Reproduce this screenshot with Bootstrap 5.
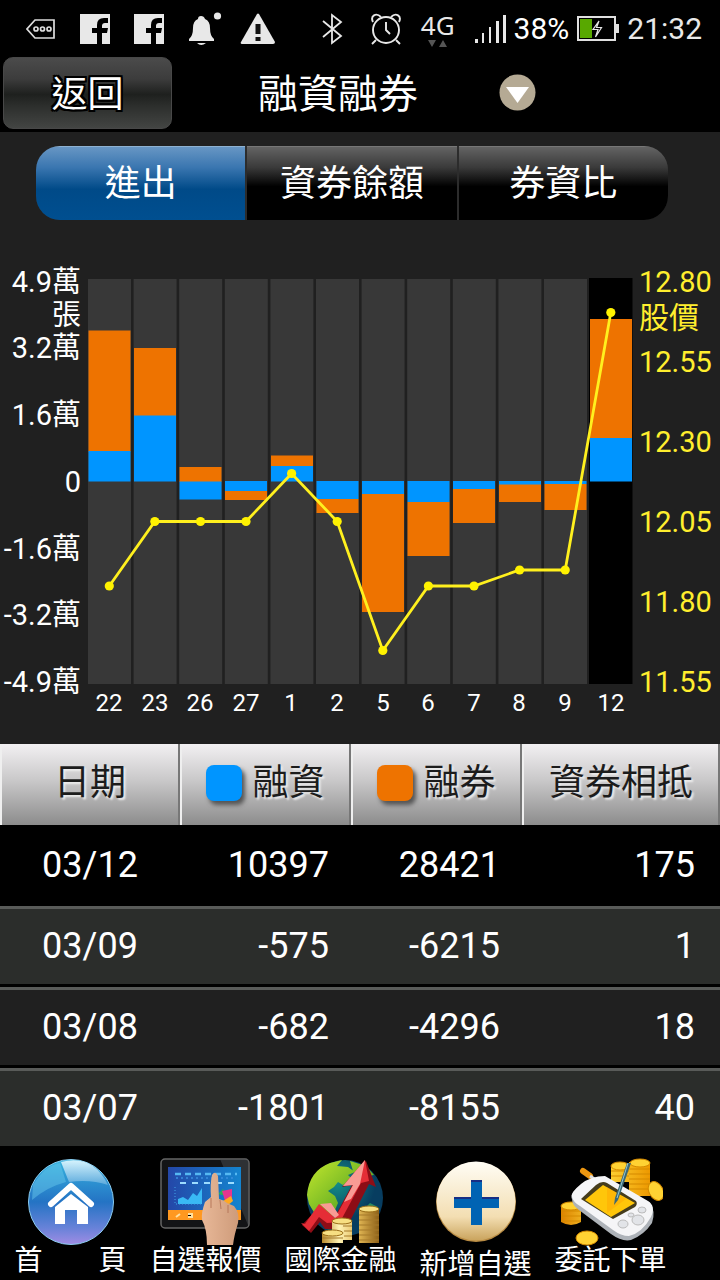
<!DOCTYPE html>
<html lang="zh-Hant">
<head>
<meta charset="utf-8">
<meta name="viewport" content="width=device-width, initial-scale=1">
<title>融資融券</title>
<link rel="stylesheet" href="https://cdn.jsdelivr.net/npm/bootstrap@5.3.0/dist/css/bootstrap.min.css">
<style>
body{background:#202020;color:#fff;font-family:Roboto,"Noto Sans CJK TC",sans-serif}
svg{display:block;flex:none}
.status-bar{height:57px;padding:0 18px 0 26px;font-size:30px;line-height:56px;color:#e8e8e8}
.status-left{gap:24px}
.net{font-family:"Noto Sans",sans-serif;font-size:26px;line-height:28px;height:36px}
.title-bar{height:75px;padding:0 3px}
.title-bar h1{font-size:40px;line-height:76px;margin-left:86px}
.menu-btn{margin:17px 0 0 81px}
.back-btn{width:169px;height:72px;border:1px solid #484848;border-radius:10px;font-size:36px;line-height:36px;padding:4px 0 0;color:#fff;
 background:linear-gradient(#4b4b4b,#3c3c3c 30%,#1e201e 52%,#2c2e2c 68%,#434543);
 text-shadow:2px 0 #000,-2px 0 #000,0 2px #000,0 -2px #000,2px 2px #000,-2px -2px #000,2px -2px #000,-2px 2px #000}
.tabs{margin:14px 52px 20px 36px;border-radius:24px;overflow:hidden;gap:2px;background:#2c2c2c}
.tabs button{height:74px;border:0;border-top:1px solid #777;color:#fff;font-size:36px;line-height:72px;padding:0;
 background:linear-gradient(#636363,#3a3a3a 28%,#000 54%,#000)}
.tabs button.active{border-top-color:#8eb2d2;background:linear-gradient(#6796c4,#3a76b0 28%,#004a88 58%,#004f90)}
.chart{width:100%;height:auto}
.axis-label{font-size:29px}
.quotes{table-layout:fixed;font-size:36px;line-height:40px;border-collapse:separate;border-spacing:0}
.quotes th{height:81px;padding:0 0 4px;font-weight:400;color:#1c1c1c;text-align:center;text-shadow:2px 2px 2px #eee;
 border-left:2px solid #efefef;border-right:2px solid #777;
 background:linear-gradient(#f2f0f2,#c9c8c9 45%,#8c8c8c)}
.quotes td{height:81px;padding:0 22px 2px 0;text-align:right;border-top:3px solid #595b59;border-bottom:3px solid #000;background:#202020}
.quotes td:last-child{padding-right:25px}
.quotes td:first-child{text-align:center;padding-right:0}
.quotes tr:nth-child(even) td{background:#2b2d2b}
.quotes tbody tr:first-child td{background:#000;border-top-color:#000}
.legend{gap:10px}
.swatch{width:36px;height:36px;border-radius:8px;box-shadow:3px 4px 4px #555}
.margin-color{background:#0095ff}
.short-color{background:#ee7300}
.bottom-nav{padding:8px 42px 1px 3px;font-size:28px;line-height:28px}
.bottom-nav a{color:#fff;text-decoration:none;white-space:nowrap}
.bottom-nav svg{width:104px;height:90px}
.add-link{padding-top:4px}
.home-label{width:112px}
</style>
</head>
<body>
<header class="bg-black">
 <div class="status-bar d-flex align-items-center justify-content-between">
  <div class="status-left d-flex align-items-center">
   <svg width="30" height="22" viewBox="0 0 30 22" fill="none" stroke="#ddd" stroke-width="1.7"><path d="M9 2H28V20H9L1 11Z"/><circle cx="10" cy="11" r="2"/><circle cx="16.500" cy="11" r="2"/><circle cx="23" cy="11" r="2"/></svg>
   <svg width="30" height="30" viewBox="0 0 30 30"><path fill="#e8e8e8" d="M0 0H30V30H0Z"/><path d="M17 30V19H12V14H17V11Q17 4 24 4H28V9H25Q22 9 22 12V14H28L27 19H22V30Z" fill="#000"/></svg>
   <svg width="30" height="30" viewBox="0 0 30 30"><path fill="#e8e8e8" d="M0 0H30V30H0Z"/><path d="M17 30V19H12V14H17V11Q17 4 24 4H28V9H25Q22 9 22 12V14H28L27 19H22V30Z" fill="#000"/></svg>
   <div class="d-flex align-items-center" style="gap:18px">
    <svg width="34" height="34" viewBox="0 0 34 34" fill="#e8e8e8"><circle cx="29.500" cy="4" r="3.600"/><path d="M13 4Q16 4 17 7Q22 9 22 16Q22 24 26 27V29H1V27Q5 24 5 16Q5 9 10 7Q10 4 13 4ZM9 31H18Q13 35 9 31Z"/></svg>
    <svg width="36" height="32" viewBox="0 0 36 32"><path fill="#e8e8e8" d="M17 1Q18 0 19 1L35 29Q35 31 33 31H2Q0 31 1 29Z"/><path d="M15.500 11H20.500V21H15.500ZM15.500 24H20.500V28H15.500Z" fill="#111"/></svg>
   </div>
  </div>
  <div class="d-flex align-items-center" style="gap:20px">
   <svg class="me-2" width="22" height="32" viewBox="0 0 22 32" fill="none" stroke="#e8e8e8" stroke-width="1.800"><path d="M2 8L20 23L11 30V2L20 9L2 24"/></svg>
   <svg width="30" height="32" viewBox="0 0 30 32" fill="none" stroke="#e8e8e8" stroke-width="1.900"><circle cx="15" cy="17" r="13"/><path d="M15 9V17L19 21M5 27L1 31M25 27L29 31M2 9C-1 3 5-1 10 4M28 9C31 3 25-1 20 4"/></svg>
   <div class="net">4G<svg width="33" height="8" viewBox="0 0 33 8" fill="#555"><path d="M7 1H15L11 8ZM18 8H26L22 1Z"/></svg></div>
   <div class="d-flex align-items-center" style="gap:8px">
    <svg width="31" height="28" viewBox="0 0 31 28" fill="#e8e8e8"><path d="M0 24H3V28H0ZM7 18H9V28H7ZM14 12H16V28H14ZM21 6H24V28H21ZM28 0H31V28H28Z"/></svg>
    <span class="text-white">38%</span>
    <svg width="42" height="26" viewBox="0 0 42 26"><rect x="1" y="1" width="37" height="23" fill="none" stroke="#e0e0e0" stroke-width="2"/><path d="M39 8H42V17H39Z" fill="#e0e0e0"/><path d="M3 3H15V22H3Z" fill="#58a800"/><path d="M22 5L16 13.500H21L18.500 21L24.500 11.500H19.500Z" fill="none" stroke="#e8e8e8" stroke-width="1.200"/></svg>
    <span>21:32</span>
   </div>
  </div>
 </div>
 <div class="title-bar d-flex align-items-start">
  <button type="button" class="back-btn">返回</button>
  <h1 class="mb-0 fw-normal">融資融券</h1>
  <button type="button" class="menu-btn btn p-0 border-0" aria-label="選單"><svg width="37" height="37" viewBox="0 0 37 37"><circle cx="18.500" cy="18.500" r="18" fill="#b5aa94"/><path d="M7 13H30L18.500 29Z" fill="#fff"/></svg></button>
 </div>
</header>
<main>
 <div class="tabs d-flex">
  <button type="button" class="active col">進出</button>
  <button type="button" class="col">資券餘額</button>
  <button type="button" class="col">券資比</button>
 </div>
 <svg class="chart" viewBox="0 240 720 504" role="img" aria-label="融資融券進出與股價">
  <path fill="#383838" d="M88 279h43v405h-43zM133.600 279h43v405h-43zM179.200 279h43v405h-43zM224.800 279h43v405h-43zM270.400 279h43v405h-43zM316 279h43v405h-43zM361.600 279h43v405h-43zM407.200 279h43v405h-43zM452.800 279h43v405h-43zM498.400 279h43v405h-43zM544 279h43v405h-43z"/>
  <path fill="#000" d="M589 278h43.500v406h-43.500z"/>
  <g fill="#ee7300">
   <rect x="88.500" y="330.500" width="42" height="121"/><rect x="134" y="348" width="42" height="68"/><rect x="179.500" y="467" width="42" height="15"/><rect x="225" y="491" width="42" height="9"/><rect x="271" y="455.500" width="42" height="11"/><rect x="316.500" y="499" width="42" height="14"/><rect x="362" y="494" width="42" height="118"/><rect x="407.500" y="502" width="42" height="54"/><rect x="453" y="489" width="42" height="34"/><rect x="499" y="484" width="42" height="18"/><rect x="544.500" y="484" width="42" height="26"/><rect x="590" y="319" width="42" height="120"/>
  </g>
  <g fill="#0095ff">
   <rect x="88.500" y="451" width="42" height="30.500"/><rect x="134" y="415.500" width="42" height="66"/><rect x="179.500" y="481.500" width="42" height="18"/><rect x="225" y="481" width="42" height="10"/><rect x="271" y="466" width="42" height="15.500"/><rect x="316.500" y="481" width="42" height="18"/><rect x="362" y="481" width="42" height="13"/><rect x="407.500" y="481" width="42" height="21"/><rect x="453" y="481" width="42" height="8"/><rect x="499" y="481" width="42" height="3.500"/><rect x="544.500" y="481" width="42" height="3"/><rect x="590" y="438" width="42" height="43.500"/>
  </g>
  <polyline fill="none" stroke="#fff01e" stroke-width="2.800" points="109.300,586 154.800,521.500 200.500,521.500 246,521.500 291.600,473.500 337.200,521.500 382.800,650.500 428.400,586 474,586 519.600,570 565.200,570 610.800,312.500"/>
  <g fill="#fff200"><circle cx="109.300" cy="586" r="4.600"/><circle cx="154.800" cy="521.500" r="4.600"/><circle cx="200.500" cy="521.500" r="4.600"/><circle cx="246" cy="521.500" r="4.600"/><circle cx="291.600" cy="473.500" r="4.600"/><circle cx="337.200" cy="521.500" r="4.600"/><circle cx="382.800" cy="650.500" r="4.600"/><circle cx="428.400" cy="586" r="4.600"/><circle cx="474" cy="586" r="4.600"/><circle cx="519.600" cy="570" r="4.600"/><circle cx="565.200" cy="570" r="4.600"/><circle cx="610.800" cy="312.500" r="4.600"/></g>
  <g class="axis-label" fill="#fff" text-anchor="end">
   <text x="81" y="292">4.9萬</text><text x="81" y="325">張</text><text x="81" y="358">3.2萬</text><text x="81" y="425">1.6萬</text><text x="81" y="492">0</text><text x="81" y="559">-1.6萬</text><text x="81" y="625">-3.2萬</text><text x="81" y="692">-4.9萬</text>
  </g>
  <g class="axis-label" fill="#ffee2e">
   <text x="639" y="292">12.80</text><text x="639" y="328" font-size="30">股價</text><text x="639" y="372">12.55</text><text x="639" y="452">12.30</text><text x="639" y="532">12.05</text><text x="639" y="612">11.80</text><text x="639" y="692">11.55</text>
  </g>
  <g font-size="24" fill="#fff" text-anchor="middle">
   <text x="109" y="711">22</text><text x="155" y="711">23</text><text x="200" y="711">26</text><text x="246" y="711">27</text><text x="291" y="711">1</text><text x="337" y="711">2</text><text x="383" y="711">5</text><text x="428" y="711">6</text><text x="474" y="711">7</text><text x="519" y="711">8</text><text x="565" y="711">9</text><text x="611" y="711">12</text>
  </g>
 </svg>
 <table class="quotes w-100">
  <colgroup><col style="width:25%"><col style="width:23.750%"><col style="width:23.750%"><col></colgroup>
  <thead><tr>
   <th scope="col">日期</th>
   <th scope="col"><div class="legend d-flex align-items-center justify-content-center"><span class="swatch margin-color"></span>融資</div></th>
   <th scope="col"><div class="legend d-flex align-items-center justify-content-center"><span class="swatch short-color"></span>融券</div></th>
   <th scope="col">資券相抵</th>
  </tr></thead>
  <tbody>
   <tr><td>03/12</td><td>10397</td><td>28421</td><td>175</td></tr>
   <tr><td>03/09</td><td>-575</td><td>-6215</td><td>1</td></tr>
   <tr><td>03/08</td><td>-682</td><td>-4296</td><td>18</td></tr>
   <tr><td>03/07</td><td>-1801</td><td>-8155</td><td>40</td></tr>
  </tbody>
 </table>
</main>
<nav class="bottom-nav bg-black d-flex">
 <a href="#" class="col d-flex flex-column align-items-center">
  <svg viewBox="0 0 104 90"><defs><linearGradient id="homeBg" x1="0" y1="0" x2="0" y2="1"><stop offset="0" stop-color="#36b4df"/><stop offset=".5" stop-color="#2473c4"/><stop offset=".8" stop-color="#6682d8"/><stop offset="1" stop-color="#a08ce4"/></linearGradient><linearGradient id="homeGloss" x1="0" y1="0" x2="0" y2="1"><stop offset="0" stop-color="#d5f3fd"/><stop offset="1" stop-color="#5aa9dc"/></linearGradient></defs>
   <circle cx="52" cy="45" r="42.500" fill="url(#homeBg)" stroke="#8bcdf0"/><path d="M42 5Q74-3 89 28Q71 22 50 25Z" fill="url(#homeGloss)"/><path d="M14 28Q26 8 41 6L47 25Q28 30 13 43Z" fill="#6dcbed" opacity=".45"/>
   <path d="M32 47L52 29L72 47" fill="none" stroke="#fff" stroke-width="6" stroke-linecap="round" stroke-linejoin="round"/><path d="M36 50L52 37L69 50V67H58V53H46V67H36Z" fill="#fff"/></svg>
  <span class="home-label d-flex justify-content-between"><span>首</span><span>頁</span></span>
 </a>
 <a href="#" class="col d-flex flex-column align-items-center">
  <svg viewBox="0 0 104 90"><defs><linearGradient id="screenBg"><stop offset="0" stop-color="#2447a8"/><stop offset="1" stop-color="#1484cf"/></linearGradient><linearGradient id="skin"><stop offset="0" stop-color="#e8b898"/><stop offset="1" stop-color="#ce9b7a"/></linearGradient></defs>
   <rect x="7" y="2" width="88" height="69" rx="4" fill="#131416" stroke="#666" stroke-width="1.500"/><path d="M66 2H94V68Z" fill="#4a4d52" opacity=".5"/><path d="M14 10H87V54H14Z" fill="url(#screenBg)"/><path d="M14 53H87V63H14Z" fill="#ff9820"/>
   <path d="M21 17H83" stroke="#55b8f2" stroke-width="2.500" stroke-dasharray="6 4"/><path d="M22 21H82" stroke="#3a8ee0" stroke-width="1.500" stroke-dasharray="2 3"/><path d="M26 26H82" stroke="#9cdcff" stroke-width="2" stroke-dasharray="6 6"/><path d="M24 47V42L29 40L34 43L39 36L43 39L48 31V47Z" fill="#39b9f5"/><path d="M21 30V47H49" fill="none" stroke="#40a4e8" stroke-dasharray="1 2"/><path d="M22 60L26 57M34 57H38V60H34" stroke="#ffe0a0" stroke-width="2"/><path d="M64 37L69 32L73 39Z" fill="#2cae56"/><path d="M68 34L78 32V41L72 47Z" fill="#e6358f"/><path d="M69 44L77 39L79 44L73 49Z" fill="#ffa820"/>
   <path d="M53 88Q53 72 48 63Q47 56 51 45L57 40Q56 27 58 18Q61 13 64 19L65 42Q70 43 73 46L80 49Q86 56 84 66Q80 79 79 88Z" fill="url(#skin)"/><path d="M66 43L67 52M74 48L74 56M57 41V51" fill="none" stroke="#b7785b" stroke-width="1"/></svg>
  <span>自選報價</span>
 </a>
 <a href="#" class="col d-flex flex-column align-items-center">
  <svg viewBox="0 0 104 90"><defs><radialGradient id="sea" cx=".4" cy=".3"><stop offset="0" stop-color="#148e87"/><stop offset="1" stop-color="#073d60"/></radialGradient><linearGradient id="land" x1="0" y1="0" x2="1" y2="1"><stop offset="0" stop-color="#c5e82d"/><stop offset="1" stop-color="#2c8c1d"/></linearGradient><linearGradient id="gold"><stop offset="0" stop-color="#b88a2c"/><stop offset=".3" stop-color="#fff3b4"/><stop offset=".65" stop-color="#dfb452"/><stop offset="1" stop-color="#8d6018"/></linearGradient></defs>
   <circle cx="56" cy="41" r="38" fill="url(#sea)"/><path d="M18 38Q20 14 41 6L53 3L48 9L59 10L66 15L59 18L63 22L54 28L49 25L45 30L39 34L46 39L49 46L43 60L35 69L26 57L20 47ZM61 4L77 9L85 18L72 20L64 14Z" fill="url(#land)"/><path d="M72 55L81 46L89 50L85 64L75 71Z" fill="#278b62"/>
   <path d="M13 68L31 49L43 65L63 28L53 30L77 4L87 30L80 27L57 72H36L31 65L22 76Z" fill="#8d0d16"/><path d="M12 66L16 67L30 47L46 61L64 28L54 29L76 3L80 24L72 26L51 65L38 66L30 60L20 74Z" fill="#e52d36"/><path d="M31 47L42 46L50 58L46 61ZM54 29L76 3L71 27L62 42L55 45L64 28Z" fill="#f99b94"/>
   <path d="M43 64V83H63V64ZM70 52V86H90V52ZM33 76V86H54V76Z" fill="url(#gold)"/><g fill="#f7df82" stroke="#9b6e18"><ellipse cx="53" cy="64" rx="10" ry="3"/><ellipse cx="43.500" cy="76" rx="10.500" ry="3"/><ellipse cx="80" cy="52" rx="10" ry="3"/></g><path d="M70 58H90M70 63H90M70 68H90M70 73H90M70 78H90M70 83H90M54 69H63M55 74H63M55 79H63M33 81H54" stroke="#a67b2b" stroke-width="1.200"/></svg>
  <span>國際金融</span>
 </a>
 <a href="#" class="add-link col d-flex flex-column align-items-center">
  <svg viewBox="0 0 104 90"><defs><linearGradient id="cream" x1="0" y1="0" x2="0" y2="1"><stop offset="0" stop-color="#fffdf5"/><stop offset=".7" stop-color="#f3deb2"/><stop offset="1" stop-color="#caa45d"/></linearGradient></defs><circle cx="52" cy="41" r="40" fill="#b88b43"/><circle cx="52" cy="40" r="39.500" fill="url(#cream)"/><path d="M47 19H58V36H75V47H58V64H47V47H30V36H47Z" fill="#0063b3"/><path d="M47 20H58M30 37H47M58 37H75" stroke="#172e85" stroke-width="2"/></svg>
  <span>新增自選</span>
 </a>
 <a href="#" class="col d-flex flex-column align-items-center">
  <svg viewBox="0 0 104 90"><defs><linearGradient id="coin"><stop offset="0" stop-color="#dd8300"/><stop offset=".45" stop-color="#ffdc3d"/><stop offset="1" stop-color="#ed9800"/></linearGradient></defs>
   <path d="M52 9V25H70V9ZM70 5V39H91V5ZM2 49V65Q12 71 22 65V49Z" fill="url(#coin)"/><path d="M70 12H91M70 17H91M70 22H91M70 27H91M70 32H91M52 14H70M52 19H70M2 54H22M2 59H22M2 64H22" stroke="#d58a00"/><g fill="#ffd233" stroke="#d58a00"><ellipse cx="61" cy="9" rx="9" ry="4"/><ellipse cx="81" cy="6" rx="10" ry="4"/><ellipse cx="12" cy="49" rx="10" ry="4"/><ellipse cx="28" cy="81" rx="11" ry="7"/><ellipse cx="97" cy="34" rx="7" ry="10" transform="rotate(-28 97 34)"/></g>
   <path d="M24 14L31 19" stroke="#ed9711" stroke-width="6" stroke-linecap="round"/><path d="M31 19L40 25" stroke="#ddd" stroke-width="3"/><path d="M13 42Q10 37 22 28Q32 20 46 20L91 46Q97 54 93 66Q85 78 72 83Q63 85 52 77L20 53Q13 48 13 42Z" fill="#aeb3b9"/><path d="M13 40Q11 36 22 27Q32 19 46 19L89 44Q97 49 92 60Q83 76 70 79Q62 79 54 73L21 49Q14 45 13 40Z" fill="#f5f5f7"/><path d="M22 42L37 28Q43 23 48 26L77 44Q79 47 76 50L54 62L49 59Z" fill="#453c1c"/><path d="M26 43L44 28L76 46L52 60Z" fill="#ffc60a"/><path d="M48 30L67 42L48 56Z" fill="#ff9f00" opacity=".4"/><g fill="#e2e4e8" stroke="#bbb"><ellipse cx="64" cy="67" rx="5" ry="4"/><ellipse cx="79" cy="63" rx="6" ry="5"/><ellipse cx="83" cy="53" rx="4" ry="3"/><ellipse cx="72" cy="58" rx="3" ry="2"/></g><path d="M68 6L56 41L55 48L59 43L72 6Z" fill="#3c6875"/><path d="M69 6L58 41" stroke="#95c5d0"/></svg>
  <span>委託下單</span>
 </a>
</nav>
<script src="https://cdn.jsdelivr.net/npm/bootstrap@5.3.0/dist/js/bootstrap.bundle.min.js"></script>
</body>
</html>
